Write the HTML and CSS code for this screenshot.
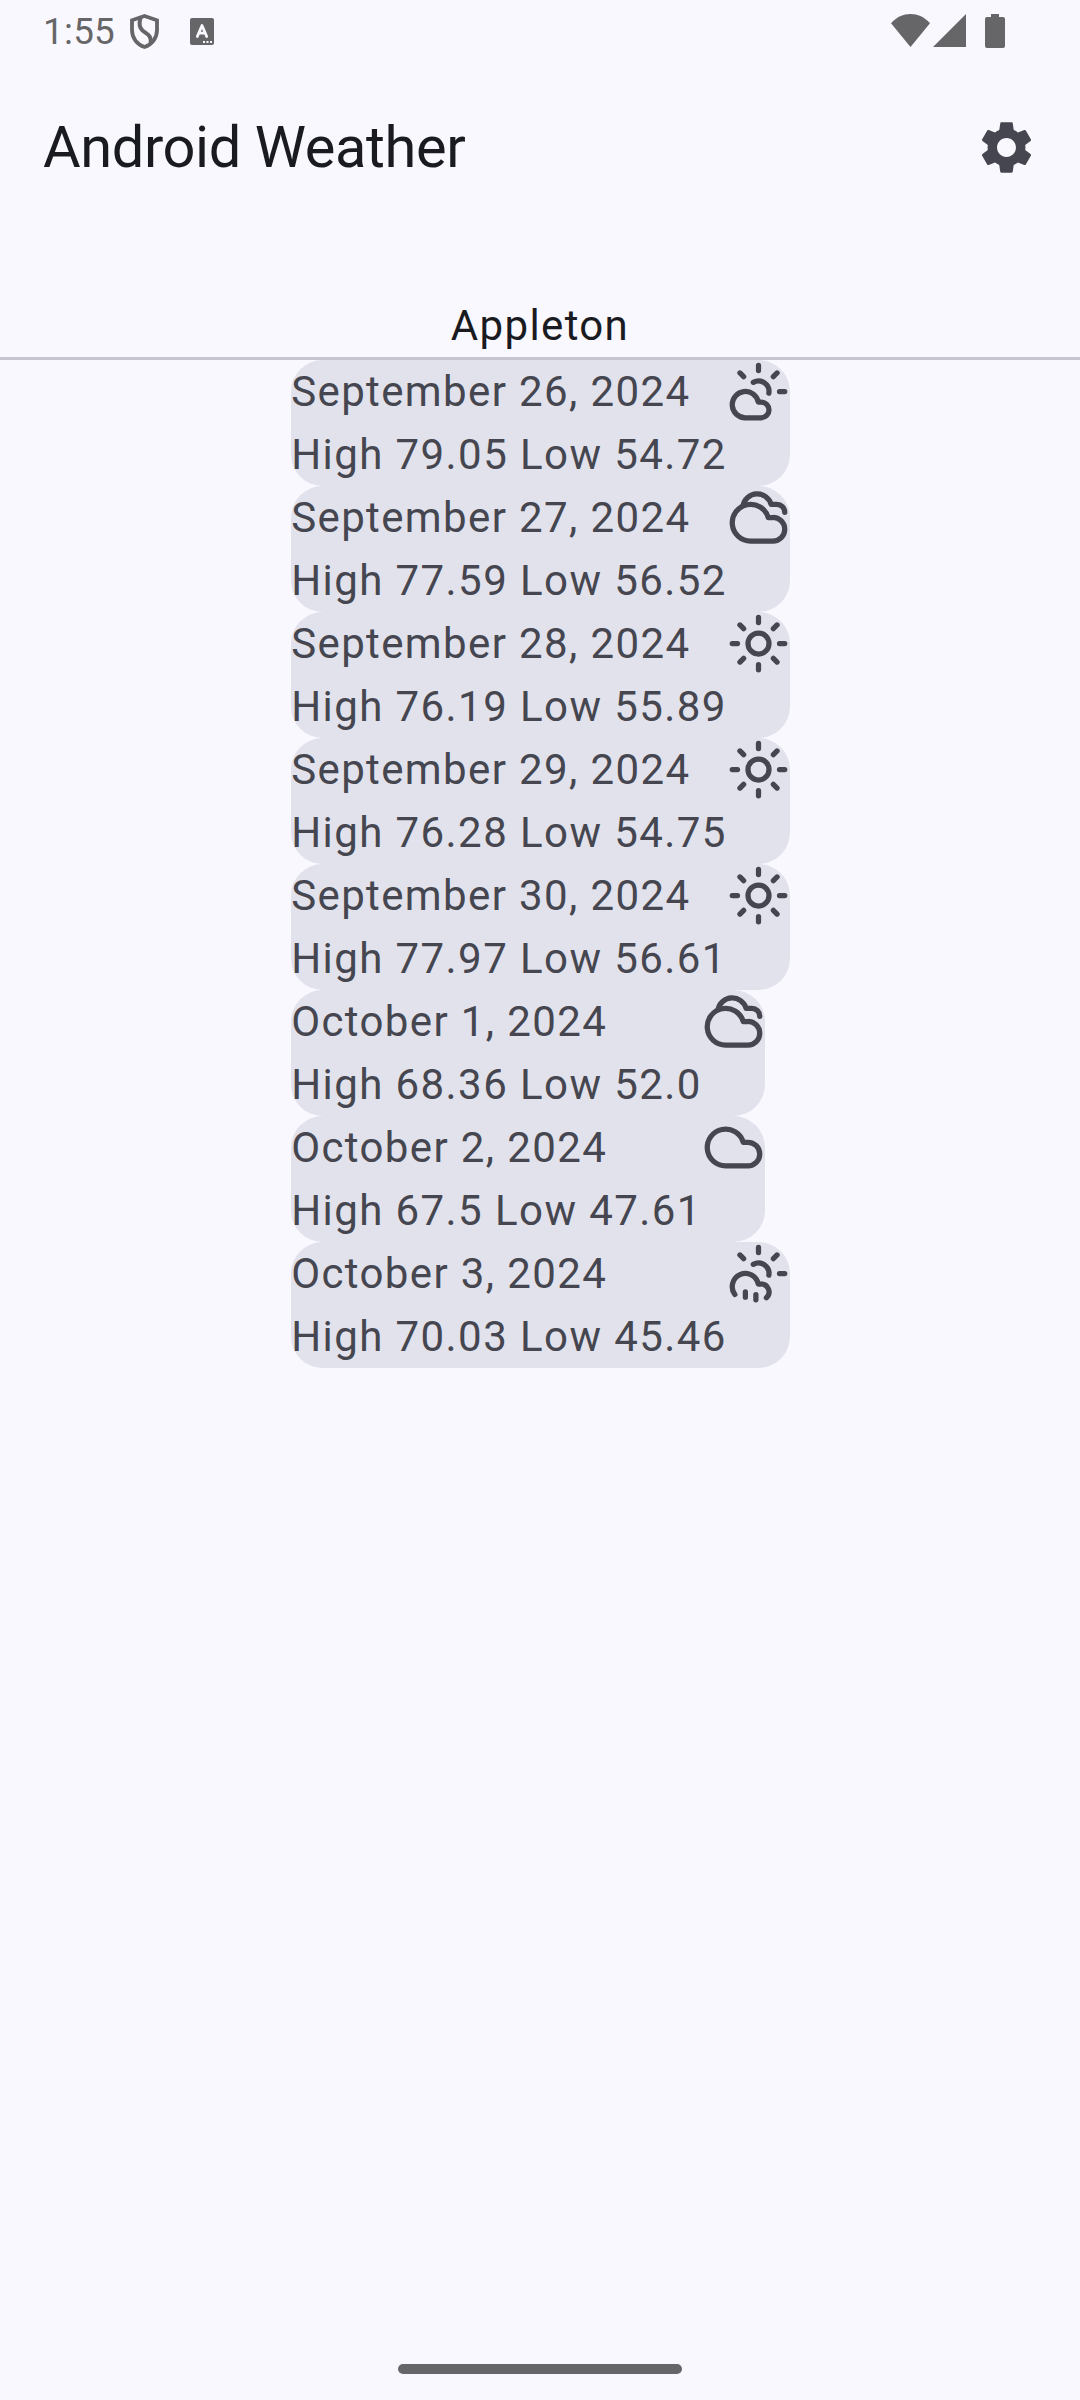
FILE: index.html
```html
<!DOCTYPE html>
<html lang="en">
<head>
    <meta charset="UTF-8">
    <title>Android Weather</title>
    <link rel="stylesheet" href="styles.css">
</head>
<body>
    <!-- shared icon shapes -->
    <svg class="sprite" width="0" height="0">
        <symbol id="sun-rays" viewBox="0 0 24 24">
            <path d="M12 2v2M4.93 4.93l1.41 1.41M20 12h2M19.07 4.93l-1.41 1.41M15.947 12.65a4 4 0 0 0-5.925-4.128"/>
        </symbol>
        <symbol id="partly-cloudy" viewBox="0 0 24 24">
            <use href="#sun-rays"/>
            <path d="M13 22H7a5 5 0 1 1 4.9-6H13a3 3 0 0 1 0 6Z"/>
        </symbol>
        <symbol id="sun-rain" viewBox="0 0 24 24">
            <use href="#sun-rays"/>
            <path d="M3 20a5 5 0 1 1 8.9-4H13a3 3 0 0 1 2 5.24M11 20v2M7 19v2"/>
        </symbol>
        <symbol id="cloudy" viewBox="0 0 24 24">
            <path d="M17.5 21H9a7 7 0 1 1 6.71-9h1.79a4.5 4.5 0 1 1 0 9Z"/>
            <path d="M22 10a3 3 0 0 0-3-3h-2.207a5.502 5.502 0 0 0-10.702.5"/>
        </symbol>
        <symbol id="cloud" viewBox="0 0 24 24">
            <path d="M17.5 19H9a7 7 0 1 1 6.71-9h1.79a4.5 4.5 0 1 1 0 9Z"/>
        </symbol>
        <symbol id="sunny" viewBox="0 0 24 24">
            <circle cx="12" cy="12" r="4"/>
            <path d="M12 2v2M12 20v2M4.93 4.93l1.41 1.41M17.66 17.66l1.41 1.41M2 12h2M20 12h2M6.34 17.66l-1.41 1.41M19.07 4.93l-1.41 1.41"/>
        </symbol>
    </svg>

    <div class="status-bar">
        <span class="time">1:55</span>
        <svg class="shield" width="30" height="36" viewBox="0 0 30 36">
            <path d="M14.5 2L27 6.3V16C27 24 22 30.5 14.5 33C7 30.5 2 24 2 16V6.3Z" fill="none" stroke="currentColor" stroke-width="3.8"/>
            <path d="M10.5 4C8.8 9.5 9.3 13.5 12.5 16.5C16 19.5 22 21 20.5 29" fill="none" stroke="currentColor" stroke-width="4"/>
        </svg>
        <svg class="keyboard" width="24" height="27" viewBox="0 0 24 27">
            <rect width="24" height="27" rx="2" fill="currentColor"/>
            <path class="cut" d="M7.3 18.5L12 7.5L16.7 18.5M9 15.2H15" fill="none" stroke-width="2.8" stroke-linecap="round" stroke-linejoin="round"/>
            <path class="cut" d="M13 24H22" fill="none" stroke-width="2" stroke-dasharray="2 1.5"/>
        </svg>
        <div class="status-right">
            <svg width="39" height="33" viewBox="0 0 39 33">
                <path d="M19.5 33L0 9.2C11-3 28-3 39 9.2Z" fill="currentColor"/>
            </svg>
            <svg width="33" height="33" viewBox="0 0 33 33">
                <path d="M33 0V33H0Z" fill="currentColor"/>
            </svg>
            <svg class="battery" width="20" height="34" viewBox="0 0 20 34">
                <path d="M6 0H14V3H18Q20 3 20 5V32Q20 34 18 34H2Q0 34 0 32V5Q0 3 2 3H6Z" fill="currentColor"/>
            </svg>
        </div>
    </div>

    <header class="app-bar">
        <h1>Android Weather</h1>
        <svg class="settings" viewBox="0 0 24 24">
            <path d="M19.14 12.94c.04-.3.06-.61.06-.94 0-.32-.02-.64-.07-.94l2.03-1.58c.18-.14.23-.41.12-.61l-1.92-3.32c-.12-.22-.37-.29-.59-.22l-2.39.96c-.5-.38-1.03-.7-1.62-.94l-.36-2.54c-.04-.24-.24-.41-.48-.41h-3.84c-.24 0-.43.17-.47.41l-.36 2.54c-.59.24-1.13.57-1.62.94l-2.39-.96c-.22-.08-.47 0-.59.22L2.74 8.87c-.12.21-.08.47.12.61l2.03 1.58c-.05.3-.09.63-.09.94s.02.64.07.94l-2.03 1.58c-.18.14-.23.41-.12.61l1.92 3.32c.12.22.37.29.59.22l2.39-.96c.5.38 1.03.7 1.62.94l.36 2.54c.05.24.24.41.48.41h3.84c.24 0 .44-.17.47-.41l.36-2.54c.59-.24 1.13-.56 1.62-.94l2.39.96c.22.08.47 0 .59-.22l1.92-3.32c.12-.22.07-.47-.12-.61l-2.01-1.58zM12 15.6c-1.98 0-3.6-1.62-3.6-3.6s1.62-3.6 3.6-3.6 3.6 1.62 3.6 3.6-1.62 3.6-3.6 3.6z" fill="currentColor"/>
        </svg>
    </header>

    <div class="city">Appleton</div>

    <main class="forecast">
        <div class="day">
            <div class="date">September 26, 2024</div>
            <svg class="icon"><use href="#partly-cloudy"/></svg>
            <div class="temps">High 79.05 Low 54.72</div>
        </div>
        <div class="day">
            <div class="date">September 27, 2024</div>
            <svg class="icon"><use href="#cloudy"/></svg>
            <div class="temps">High 77.59 Low 56.52</div>
        </div>
        <div class="day">
            <div class="date">September 28, 2024</div>
            <svg class="icon"><use href="#sunny"/></svg>
            <div class="temps">High 76.19 Low 55.89</div>
        </div>
        <div class="day">
            <div class="date">September 29, 2024</div>
            <svg class="icon"><use href="#sunny"/></svg>
            <div class="temps">High 76.28 Low 54.75</div>
        </div>
        <div class="day">
            <div class="date">September 30, 2024</div>
            <svg class="icon"><use href="#sunny"/></svg>
            <div class="temps">High 77.97 Low 56.61</div>
        </div>
        <div class="day">
            <div class="date">October 1, 2024</div>
            <svg class="icon"><use href="#cloudy"/></svg>
            <div class="temps">High 68.36 Low 52.0</div>
        </div>
        <div class="day">
            <div class="date">October 2, 2024</div>
            <svg class="icon"><use href="#cloud"/></svg>
            <div class="temps">High 67.5 Low 47.61</div>
        </div>
        <div class="day">
            <div class="date">October 3, 2024</div>
            <svg class="icon"><use href="#sun-rain"/></svg>
            <div class="temps">High 70.03 Low 45.46</div>
        </div>
    </main>

    <div class="nav-handle"></div>
</body>
</html>
```
FILE: styles.css
```css
* {
    box-sizing: border-box;
}
body {
    margin: 0;
    height: 2400px;
    display: flex;
    flex-direction: column;
    background-color: #faf8ff;
    color: #1a1b21;
    font-family: Roboto, sans-serif;
    font-size: 42px;
    line-height: 63px;
    letter-spacing: 1.35px;
    overflow: hidden;
}
svg {
    display: block;
    flex-shrink: 0;
}
.sprite {
    height: 0;
}
.status-bar {
    display: flex;
    align-items: flex-start;
    height: 63px;
    padding: 14px 75px 0 43px;
    color: #666668;
}
.time {
    width: 87px;
    font-size: 36.75px;
    line-height: 35px;
    letter-spacing: 0.3px;
}
.keyboard {
    margin: 4px 0 0 30px;
}
.cut {
    stroke: #faf8ff;
}
.status-right {
    display: flex;
    gap: 3px;
    margin-left: auto;
}
.battery {
    margin-left: 16px;
}
.app-bar {
    display: flex;
    align-items: center;
    justify-content: space-between;
    height: 168px;
    padding: 0 42px;
}
h1 {
    margin: 0;
    padding: 1px 0 0 1px;
    font-size: 57.75px;
    font-weight: 400;
    line-height: 73.5px;
    letter-spacing: -0.4px;
}
.settings {
    width: 63px;
    height: 63px;
    color: #45464f;
}
.city {
    padding-top: 63px;
    text-align: center;
    border-bottom: 3px solid #c6c5d0;
}
.forecast {
    display: flex;
    flex-direction: column;
    align-items: flex-start;
    align-self: center;
    padding-left: 1px;
}
.day {
    display: grid;
    grid-template-columns: auto 63px;
    grid-template-rows: 63px 63px;
    background-color: #e2e2ec;
    border-radius: 31.5px;
    color: #45464f;
    white-space: nowrap;
}
.date {
    letter-spacing: 1.38px;
}
.temps {
    letter-spacing: 1.42px;
}
.icon {
    width: 63px;
    height: 63px;
    fill: none;
    stroke: currentColor;
    stroke-width: 2;
    stroke-linecap: round;
    stroke-linejoin: round;
}
.nav-handle {
    width: 284px;
    height: 10px;
    margin: auto auto 26px;
    border-radius: 5px;
    background-color: #666668;
}
```
